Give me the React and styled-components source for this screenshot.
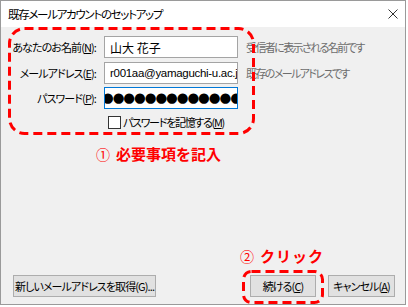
import React from "react";
import styled, { createGlobalStyle } from "styled-components";

const GlobalStyle = createGlobalStyle`
  html, body {
    margin: 0;
    padding: 0;
    background: #ffffff;
  }
  body {
    font-family: "Noto Sans CJK JP", "Noto Sans", sans-serif;
    font-size: 11px;
    color: #000000;
  }
`;

const Window = styled.div`
  position: relative;
  box-sizing: border-box;
  width: 406px;
  height: 305px;
  border: 1px solid #9a9a9a;
  background: #f0f0f0;
  display: flex;
  flex-direction: column;
  font-size: 11px;
  letter-spacing: -0.9px;
  font-feature-settings: "palt" 1;
`;

const TitleBar = styled.div`
  height: 26px;
  background: #ffffff;
  display: flex;
  align-items: center;
  justify-content: space-between;
  padding: 0 7px 0 7px;
  font-size: 11.5px;
  letter-spacing: -1.3px;
  color: #000;
`;

const Body = styled.div`
  flex: 1;
  display: flex;
  flex-direction: column;
  padding: 9px 10px 7px 0;
`;

const Form = styled.div`
  display: grid;
  grid-template-columns: 95px 134px 1fr;
  grid-template-rows: 26px 25px 25px 20px;
  column-gap: 8px;
`;

const Label = styled.label`
  height: 22px;
  display: flex;
  align-items: center;
  justify-content: flex-end;
  white-space: nowrap;
`;

const Input = styled.div`
  box-sizing: border-box;
  height: 22px;
  background: #ffffff;
  border: 1px solid ${(p) => (p.$focused ? "#0078d7" : "#a4a4a4")};
  display: flex;
  align-items: center;
  padding-left: 5px;
  overflow: hidden;
  white-space: nowrap;
  font-family: ${(p) =>
    p.$latin ? '"Liberation Sans", "Noto Sans CJK JP", sans-serif' : "inherit"};
  font-size: ${(p) => (p.$latin ? "11.5px" : "12px")};
  letter-spacing: ${(p) => (p.$latin ? "-0.3px" : "0")};
`;

const Dots = styled.span`
  margin-left: -8px;
  font-family: "DejaVu Sans", sans-serif;
  font-size: 13.5px;
  letter-spacing: -1.1px;
  line-height: 1;
`;

const Hint = styled.div`
  height: 22px;
  display: flex;
  align-items: center;
  color: #6d6d6d;
  white-space: nowrap;
  letter-spacing: -1.6px;
`;

const CheckRow = styled.div`
  grid-column: 2 / 4;
  display: flex;
  align-items: center;
  gap: 2px;
  padding-left: 4px;
  white-space: nowrap;
  letter-spacing: -1.3px;
`;

const Box = styled.span`
  box-sizing: border-box;
  width: 13px;
  height: 13px;
  background: #ffffff;
  border: 1px solid #333333;
`;

const Footer = styled.div`
  margin-top: auto;
  display: flex;
  align-items: center;
  justify-content: space-between;
  padding-left: 12px;
`;

const ButtonGroup = styled.div`
  display: flex;
  gap: 12px;
`;

const Button = styled.button`
  box-sizing: border-box;
  height: 22px;
  width: ${(p) => p.$w}px;
  padding: 0;
  background: #e1e1e1;
  border: 1px solid #adadad;
  font-family: inherit;
  font-size: 11px;
  letter-spacing: -0.9px;
  font-feature-settings: "palt" 1;
  white-space: nowrap;
  color: #000;
`;

const Overlay = styled.svg`
  position: absolute;
  left: -1px;
  top: -1px;
  width: 408px;
  height: 307px;
  pointer-events: none;
`;

const Note = styled.div`
  position: absolute;
  left: ${(p) => p.$x}px;
  top: ${(p) => p.$y}px;
  color: #ff0000;
  font-size: 15px;
  font-weight: 700;
  white-space: nowrap;
  letter-spacing: ${(p) => p.$ls || 0}px;
  font-feature-settings: normal;
  display: flex;
  align-items: center;
  gap: 6px;
  line-height: 1;
`;

const Circled = styled.span`
  font-weight: 400;
  font-size: 14px;
  letter-spacing: 0;
`;

const CloseIcon = () => (
  <svg width="10" height="10" viewBox="0 0 10 10">
    <path d="M0.5 0.5 L9.5 9.5 M9.5 0.5 L0.5 9.5" stroke="#333" strokeWidth="1" />
  </svg>
);

export default function App() {
  return (
    <>
      <GlobalStyle />
      <Window>
        <TitleBar>
          <span>既存メールアカウントのセットアップ</span>
          <CloseIcon />
        </TitleBar>
        <Body>
          <Form>
            <Label>
              あなたのお名前(<u>N</u>):
            </Label>
            <Input>山大 花子</Input>
            <Hint>受信者に表示される名前です</Hint>

            <Label>
              メールアドレス(<u>E</u>):
            </Label>
            <Input $latin>r001aa@yamaguchi-u.ac.jp</Input>
            <Hint>既存のメールアドレスです</Hint>

            <Label>
              パスワード(<u>P</u>):
            </Label>
            <Input $focused $latin>
              <Dots>●●●●●●●●●●●●●●●</Dots>
            </Input>
            <span />

            <span />
            <CheckRow>
              <Box />
              <span>
                パスワードを記憶する(<u>M</u>)
              </span>
            </CheckRow>
          </Form>
          <Footer>
            <Button $w={143}>新しいメールアドレスを取得(G)...</Button>
            <ButtonGroup>
              <Button $w={66}>
                続ける(<u>C</u>)
              </Button>
              <Button $w={67}>
                キャンセル(<u>A</u>)
              </Button>
            </ButtonGroup>
          </Footer>
        </Body>

        <Overlay viewBox="0 0 408 307">
          <rect
            x="9.5"
            y="28.5"
            width="244"
            height="105"
            rx="15"
            fill="none"
            stroke="#ff0000"
            strokeWidth="3"
            strokeDasharray="9 5"
          />
          <rect
            x="243.5"
            y="271.5"
            width="79"
            height="31"
            rx="8"
            fill="none"
            stroke="#ff0000"
            strokeWidth="3"
            strokeDasharray="9 5"
          />
        </Overlay>
        <Note $x={95} $y={145}>
          <Circled>①</Circled>
          <span>必要事項を記入</span>
        </Note>
        <Note $x={239} $y={247} $ls={1}>
          <Circled>②</Circled>
          <span>クリック</span>
        </Note>
      </Window>
    </>
  );
}
